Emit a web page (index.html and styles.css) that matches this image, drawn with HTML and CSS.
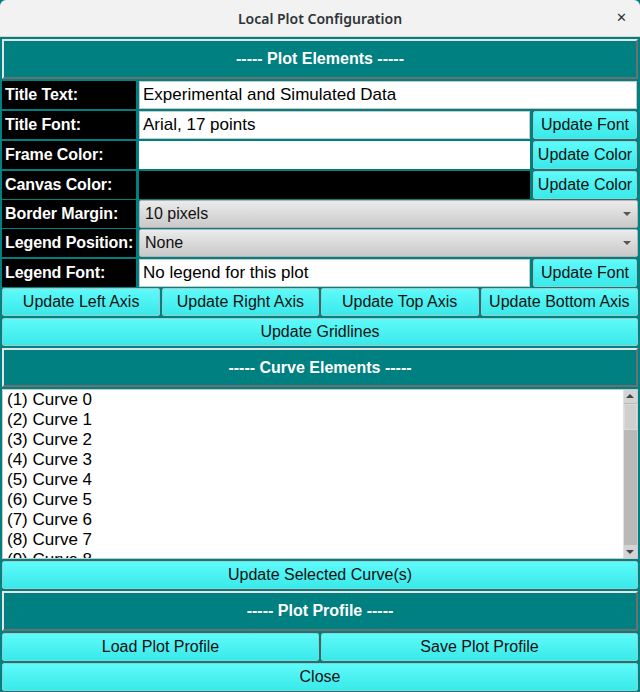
FILE: index.html
```html
<!DOCTYPE html>
<html lang="en">
  <head>
    <meta charset="UTF-8" />
    <meta name="viewport" content="width=device-width, initial-scale=1.0" />
    <title>Local Plot Configuration</title>
    <link rel="stylesheet" href="styles.css">
  </head>
  <body>
    <div class="titlebar">
      <span class="title">Local Plot Configuration</span>
      <span class="close-x">&#x2715;</span>
    </div>

    <div class="main">
      <div class="header">----- Plot Elements -----</div>

      <div class="row">
        <div class="label">Title Text:</div>
        <div class="entry wide">Experimental and Simulated Data</div>
      </div>
      <div class="row">
        <div class="label">Title Font:</div>
        <div class="entry">Arial, 17 points</div>
        <button class="btn side">Update Font</button>
      </div>
      <div class="row">
        <div class="label">Frame Color:</div>
        <div class="swatch white"></div>
        <button class="btn side">Update Color</button>
      </div>
      <div class="row">
        <div class="label">Canvas Color:</div>
        <div class="swatch black"></div>
        <button class="btn side">Update Color</button>
      </div>
      <div class="row tight">
        <div class="label">Border Margin:</div>
        <div class="combo">10 pixels<span class="arrow"></span></div>
      </div>
      <div class="row tight">
        <div class="label">Legend Position:</div>
        <div class="combo">None<span class="arrow"></span></div>
      </div>
      <div class="row">
        <div class="label">Legend Font:</div>
        <div class="entry">No legend for this plot</div>
        <button class="btn side">Update Font</button>
      </div>

      <div class="btn-row four tight">
        <button class="btn">Update Left Axis</button>
        <button class="btn">Update Right Axis</button>
        <button class="btn">Update Top Axis</button>
        <button class="btn">Update Bottom Axis</button>
      </div>
      <button class="btn full tight">Update Gridlines</button>

      <div class="header short">----- Curve Elements -----</div>

      <div class="listbox">
        <div class="items" id="curves"></div>
        <div class="scrollbar">
          <div class="sb-arrow up"></div>
          <div class="sb-track"><div class="sb-thumb"></div></div>
          <div class="sb-arrow down"></div>
        </div>
      </div>
      <button class="btn full">Update Selected Curve(s)</button>

      <div class="header">----- Plot Profile -----</div>

      <div class="btn-row two">
        <button class="btn">Load Plot Profile</button>
        <button class="btn">Save Plot Profile</button>
      </div>
      <button class="btn full tight">Close</button>
    </div>

    <script>
      // only the rows that fit in the list's view
      const curves = document.getElementById('curves');
      for (let i = 0; i < 9; i++) {
        const item = document.createElement('div');
        item.className = 'item';
        item.textContent = `(${i + 1}) Curve ${i}`;
        curves.appendChild(item);
      }
    </script>
  </body>
</html>
```

FILE: styles.css
```css
body {
  margin: 0;
  padding: 0;
  width: 640px;
  height: 692px;
  overflow: hidden;
  font-family: "Liberation Sans", Arial, sans-serif;
  background-color: #008080;
}

.titlebar {
  height: 37px;
  background: #f2f2f2;
  border-bottom: 1px solid #d6d6d6;
  box-sizing: border-box;
  display: flex;
  align-items: center;
  justify-content: center;
  position: relative;
  border-radius: 6px 6px 0 0;
}

.title {
  font-family: "Noto Sans", sans-serif;
  font-size: 14px;
  font-weight: 600;
  color: #2e3436;
}

.close-x {
  position: absolute;
  right: 13px;
  top: 10px;
  font-size: 13px;
  font-weight: bold;
  color: #2e3436;
  font-family: "DejaVu Sans", sans-serif;
}

.main {
  background: #008080;
  padding: 2px 2px 0 2px;
  display: flex;
  flex-direction: column;
  gap: 2px;
}

.tight {
  margin-top: -1px;
}

.header {
  height: 40px;
  flex: none;
  box-sizing: border-box;
  border: 2px solid;
  border-color: #e4e4e4 #6f6f6f #6f6f6f #e4e4e4;
  color: #fff;
  font-weight: bold;
  font-size: 16px;
  display: flex;
  align-items: center;
  justify-content: center;
}

.header.short {
  height: 39px;
}

.row {
  display: flex;
  height: 28px;
  flex: none;
  gap: 3px;
}

.label {
  width: 134px;
  flex: none;
  background: #000;
  color: #fff;
  font-weight: bold;
  font-size: 16px;
  display: flex;
  align-items: center;
  padding-left: 3px;
  box-sizing: border-box;
  letter-spacing: -0.1px;
}

.entry {
  flex: 1;
  background: #fff;
  border: 1px solid #c9c9c9;
  box-sizing: border-box;
  font-size: 17px;
  display: flex;
  align-items: center;
  padding-left: 3px;
  color: #000;
}

.entry.wide {
  margin-right: 1px;
}

.swatch {
  flex: 1;
}

.swatch.white {
  background: #fff;
}

.swatch.black {
  background: #000;
}

.btn {
  font-family: "Liberation Sans", Arial, sans-serif;
  font-size: 16px;
  color: #111;
  background: linear-gradient(#5ffafa, #3ae9e9);
  border: 1px solid #9cc9c9;
  border-radius: 2px;
  padding: 0;
  margin: 0;
  height: 28px;
  flex: none;
}

.btn.side {
  width: 104px;
  margin-right: 1px;
}

.btn.full {
  width: 100%;
}

.btn-row {
  display: flex;
  flex: none;
  gap: 2px;
}

.btn-row .btn {
  flex: 1;
}

.btn-row.four .btn:nth-child(1) {
  flex: 158;
}

.btn-row.four .btn:nth-child(2) {
  flex: 156;
}

.btn-row.four .btn:nth-child(3) {
  flex: 158;
}

.btn-row.four .btn:nth-child(4) {
  flex: 157;
}

.combo {
  flex: 1;
  position: relative;
  background: linear-gradient(#ebebeb, #c9c9c9);
  border: 1px solid #b3b3b3;
  border-radius: 2px;
  box-sizing: border-box;
  font-size: 16px;
  display: flex;
  align-items: center;
  padding-left: 5px;
  color: #111;
}

.arrow {
  position: absolute;
  right: 6px;
  top: 11px;
  width: 0;
  height: 0;
  border-left: 4px solid transparent;
  border-right: 4px solid transparent;
  border-top: 4px solid #555;
}

.listbox {
  height: 170px;
  flex: none;
  background: #fff;
  border: 1px solid #c9c9c9;
  box-sizing: border-box;
  display: flex;
  overflow: hidden;
}

.items {
  flex: 1;
  padding: 0 0 0 4px;
  overflow: hidden;
}

.item {
  font-size: 17px;
  height: 20px;
  line-height: 20px;
  color: #000;
}

.scrollbar {
  width: 13px;
  background: #b9b9b9;
  display: flex;
  flex-direction: column;
  border-left: 1px solid #e0e0e0;
}

.sb-arrow {
  height: 13px;
  background: #d4d4d4;
  position: relative;
}

.sb-arrow::after {
  content: "";
  position: absolute;
  left: 2px;
  width: 0;
  height: 0;
  border-left: 4px solid transparent;
  border-right: 4px solid transparent;
}

.sb-arrow.up::after {
  top: 4px;
  border-bottom: 4px solid #444;
}

.sb-arrow.down::after {
  top: 5px;
  border-top: 4px solid #444;
}

.sb-track {
  flex: 1;
  padding-top: 1px;
}

.sb-thumb {
  height: 26px;
  background: #cfcfcf;
  border: 1px solid #dadada;
  box-sizing: border-box;
}
```
